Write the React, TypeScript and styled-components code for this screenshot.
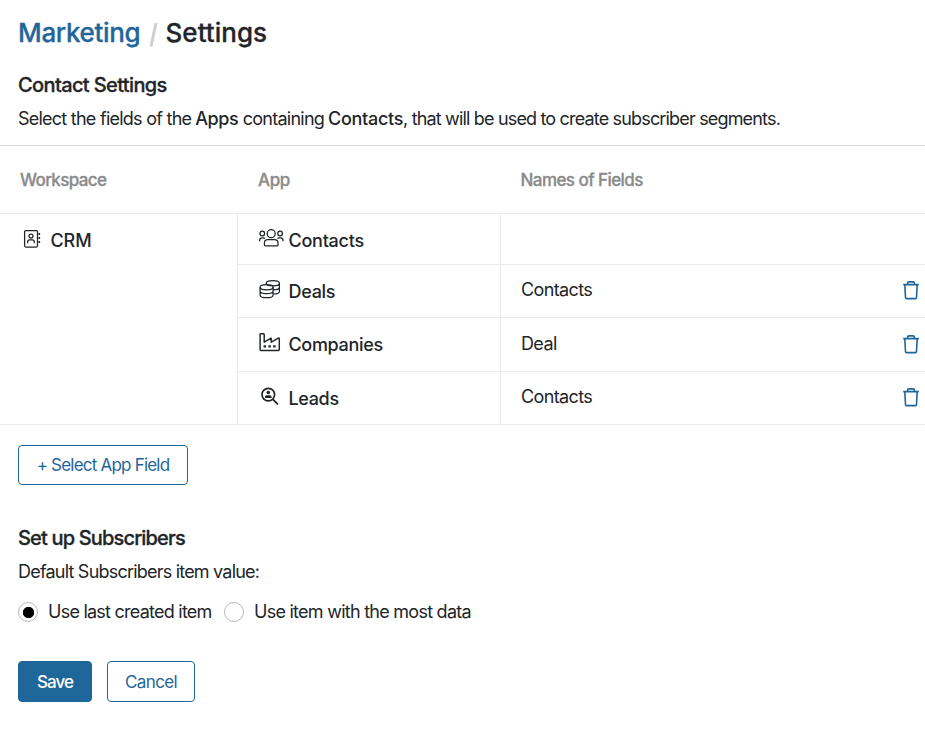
import React, { useState } from 'react';
import styled, { createGlobalStyle, css } from 'styled-components';

const GlobalStyle = createGlobalStyle`
  *, *::before, *::after { box-sizing: border-box; }
  body {
    margin: 0;
    background: #fff;
    color: #212529;
    font-family: Inter, 'Liberation Sans', sans-serif;
    font-size: 18px;
    overflow: hidden;
  }
  h1, h2, p { margin: 0; }
`;

const blue = '#1f669b';
const rule = '#e9e9e9';

/* letter and word tracking, in pixels */
const tracking = css<{ $ls?: number; $ws?: number }>`
  letter-spacing: ${(p) => p.$ls ?? 0}px;
  word-spacing: ${(p) => p.$ws ?? 0}px;
`;

/* medium weight, slightly thickened */
const medium = css`
  font-weight: 500;
  -webkit-text-stroke: 0.3px currentColor;
`;

const Page = styled.main`
  display: flex;
  flex-direction: column;
  height: 729px;
`;

const Intro = styled.header`
  height: 145px;
  padding: 17px 18px 0;
`;

const Breadcrumb = styled.h1`
  display: flex;
  font-size: 26px;
  line-height: 32px;
  ${medium}
`;

const CrumbLink = styled.a`
  width: 130px;
  color: ${blue};
  letter-spacing: -0.35px;
`;

const Slash = styled.svg`
  width: 10px;
  height: 32px;
  flex: none;
`;

const CrumbCurrent = styled.span`
  margin-left: 7.5px;
  letter-spacing: 0.03px;
`;

const Heading = styled.h2`
  font-size: 20px;
  line-height: 24px;
  white-space: nowrap;
  ${medium}
  ${tracking}
`;

const ContactHeading = styled(Heading)`
  margin-top: 24px;
`;

const Description = styled.p`
  display: flex;
  margin-top: 10px;
  line-height: 24px;
  white-space: pre;
`;

const Phrase = styled.span<{ $ls?: number; $ws?: number }>`
  ${tracking}
`;

const Strong = styled.strong<{ $ls?: number; $gap?: number }>`
  margin: 0 ${(p) => p.$gap ?? 0}px 0 4px;
  font-weight: 500;
  ${tracking}
`;

const Table = styled.section`
  border-top: 1px solid #d8d8d8;
  border-bottom: 1px solid ${rule};
  height: 280px;
`;

const TableHead = styled.div`
  display: grid;
  grid-template-columns: 238px 262.5px 1fr;
  height: 68px;
  border-bottom: 1px solid ${rule};
`;

const HeadCell = styled.div<{ $ls?: number; $ws?: number }>`
  padding: 22px 20px 0;
  color: #8b8b8b;
  font-size: 17px;
  line-height: 24px;
  ${medium}
  ${tracking}
`;

const TableBody = styled.div`
  display: grid;
  grid-template-columns: 237px 1fr;
  height: 210px;
`;

const WorkspaceCell = styled.div`
  display: flex;
  padding: 15px 0 0 23px;
  font-weight: 500;
  line-height: 24px;
`;

const WorkspaceName = styled.span`
  margin-left: 9.5px;
  letter-spacing: -0.1px;
`;

const Rows = styled.div`
  display: grid;
  grid-template-rows: 51px 53px 54px 52px;
`;

const Row = styled.div`
  display: grid;
  grid-template-columns: 263px 1fr;
  border-bottom: 1px solid ${rule};
  &:last-child { border-bottom: 0; }
`;

const AppCell = styled.div<{ $ls?: number }>`
  display: flex;
  padding: 15px 0 0 21px;
  border-left: 1px solid ${rule};
  font-weight: 500;
  line-height: 24px;
  ${tracking}
`;

const IconSlot = styled.span`
  width: 29.5px;
  flex: none;
`;

const Icon = styled.svg`
  display: block;
  fill: none;
  stroke: #212529;
  stroke-width: 1.25;
  stroke-linejoin: round;
`;

const FieldCell = styled.div<{ $top?: number }>`
  display: flex;
  justify-content: space-between;
  padding: ${(p) => p.$top ?? 13}px 5px 0 20px;
  border-left: 1px solid ${rule};
  line-height: 24px;
  letter-spacing: -0.62px;
`;

const TrashButton = styled.button`
  width: 18px;
  height: 20px;
  margin-top: 2px;
  padding: 0;
  border: 0;
  background: none;
`;

const TrashIcon = styled(Icon)`
  stroke: ${blue};
  stroke-width: 1.6;
`;

const Controls = styled.section`
  padding: 20px 18px 0;
`;

const Button = styled.button<{ $primary?: boolean; $w: number; $h: number; $ls?: number; $ws?: number }>`
  width: ${(p) => p.$w}px;
  height: ${(p) => p.$h}px;
  padding: 0;
  border: 1px solid ${blue};
  border-radius: 4px;
  background: ${(p) => (p.$primary ? blue : '#fff')};
  color: ${(p) => (p.$primary ? '#fff' : blue)};
  font-family: inherit;
  font-size: 17px;
  font-weight: ${(p) => (p.$primary ? 500 : 400)};
  white-space: nowrap;
  ${tracking}
`;

const SubscribersHeading = styled(Heading)`
  margin-top: 41px;
`;

const Label = styled.p<{ $ls?: number; $ws?: number }>`
  margin-top: 10px;
  line-height: 24px;
  ${tracking}
`;

const RadioGroup = styled.div`
  display: flex;
  margin-top: 16px;
`;

const Option = styled.label<{ $w?: number; $ls?: number; $ws?: number }>`
  display: flex;
  align-items: center;
  gap: 10px;
  width: ${(p) => (p.$w ? `${p.$w}px` : 'auto')};
  line-height: 24px;
  white-space: nowrap;
  ${tracking}
`;

const Radio = styled.input`
  appearance: none;
  flex: none;
  width: 20px;
  height: 20px;
  margin: 0;
  border: 1px solid #b9b9b9;
  border-radius: 50%;
  background: #fff;
  &:checked { background: radial-gradient(circle at 9.5px 9.5px, #000 5.3px, #fff 6px); }
`;

const Actions = styled.div`
  display: flex;
  gap: 15px;
  margin-top: 37px;
`;

const WorkspaceIcon = () => (
  <Icon width="18" height="20" viewBox="0 0 18 20">
    <rect x="1.6" y="1.6" width="12.9" height="16.4" rx="1.2" />
    <circle cx="8" cy="7" r="2" />
    <path d="M4.7 14.2V13c0-1.3.8-2.1 2-2.1h2.6c1.2 0 2 .8 2 2.1v1.2" />
    <path d="M16.3 4v2M16.3 8v2M16.3 12v2" strokeWidth="1.6" />
  </Icon>
);

const PeopleIcon = () => (
  <Icon width="26" height="20" viewBox="0.7 0.7 26 20">
    <circle cx="12.9" cy="5.4" r="4" />
    <circle cx="4" cy="5.2" r="2.3" />
    <circle cx="21.8" cy="5.2" r="2.3" />
    <path d="M6.1 16.7v-2.1c0-2 1.5-3.3 3.5-3.3h6.6c2 0 3.5 1.3 3.5 3.3v2.1c0 .5-.3.8-.8.8h-12c-.5 0-.8-.3-.8-.8zM1.3 13v-1c0-1.5 1-2.4 2.5-2.4h1.3c.6 0 1.1.2 1.5.7M24.7 13v-1c0-1.5-1-2.4-2.5-2.4h-1.5c-.6 0-1.1.2-1.5.7" />
  </Icon>
);

const CoinsIcon = () => (
  <Icon width="22" height="20" viewBox="0 0 22 20">
    <ellipse cx="7.6" cy="7.2" rx="6.5" ry="2.6" />
    <path d="M1.1 7.2v7.7c0 1.6 2.9 2.8 6.5 2.8s6.5-1.2 6.5-2.8V7.2M1.1 11c0 1.5 2.9 2.7 6.5 2.7s6.5-1.2 6.5-2.7" />
    <path d="M7.3 4.6V3.2c0-1.4 2.9-2.5 6.6-2.5s6.5 1.1 6.5 2.5v8.2c0 1.4-2.6 2.5-6.1 2.6M7.3 3.2c0 1.4 2.9 2.6 6.6 2.6s6.5-1.2 6.5-2.6M14.1 9.9c3.6 0 6.3-1.2 6.3-2.6" />
  </Icon>
);

const FactoryIcon = () => (
  <Icon width="22" height="20" viewBox="0 0.4 22 20">
    <path strokeWidth="1.45" d="M1.1 17V2c0-.6.3-.9.9-.9h2.3c.6 0 .9.3.9.9v7.6l7-4v4l7.2-4c.6-.3.9 0 .9.6V17c0 .6-.3.9-.9.9H2c-.6 0-.9-.3-.9-.9z" />
    <path d="M4.6 13.8h2.4M9.4 13.8h2.4M14.2 13.8h2.4" strokeWidth="2.2" />
  </Icon>
);

const LeadIcon = () => (
  <Icon width="22" height="20" viewBox="-0.2 0.3 22 20">
    <circle cx="9.1" cy="7.9" r="6.3" strokeWidth="1.7" />
    <path d="M13.7 12.6l5 5" strokeWidth="1.9" />
    <circle cx="9.1" cy="5.8" r="1.8" fill="#212529" stroke="none" />
    <path d="M5.8 11.3v-1c0-1 .7-1.7 1.7-1.7h3.2c1 0 1.7.7 1.7 1.7v1z" fill="#212529" stroke="none" />
  </Icon>
);

const Trash = () => (
  <TrashIcon width="18" height="20" viewBox="0 0 18 20">
    <path d="M1.2 4.6h15.6M5.6 4.6V3.2c0-.8.5-1.3 1.3-1.3h4.2c.8 0 1.3.5 1.3 1.3v1.4" />
    <path d="M2.8 4.6l.7 12.9c0 .7.4 1.1 1.1 1.1h8.8c.7 0 1.1-.4 1.1-1.1l.7-12.9" />
  </TrashIcon>
);

const apps = [
  { name: 'Contacts', ls: -0.25, icon: <PeopleIcon />, field: '' },
  { name: 'Deals', ls: -0.3, icon: <CoinsIcon />, field: 'Contacts' },
  { name: 'Companies', ls: -0.33, icon: <FactoryIcon />, field: 'Deal', top: 14 },
  { name: 'Leads', ls: -0.35, icon: <LeadIcon />, field: 'Contacts' },
];

export default function App() {
  const [source, setSource] = useState('last');
  return (
    <Page>
      <GlobalStyle />
      <Intro>
        <Breadcrumb>
          <CrumbLink>Marketing</CrumbLink>
          <Slash viewBox="0 0 10 32">
            <path d="M8 6L3 29.5" stroke="#d0d0d0" strokeWidth="3" />
          </Slash>
          <CrumbCurrent>Settings</CrumbCurrent>
        </Breadcrumb>
        <ContactHeading $ls={-0.62}>Contact Settings</ContactHeading>
        <Description>
          <Phrase $ls={-0.78} $ws={0.2}>Select the fields of the</Phrase>
          <Strong $ls={-0.45} $gap={4.5}>Apps</Strong>
          <Phrase $ls={-0.75}>containing</Phrase>
          <Strong $ls={-0.3}>Contacts</Strong>
          <Phrase $ls={-0.83}>, that will be used to create subscriber segments.</Phrase>
        </Description>
      </Intro>
      <Table>
        <TableHead>
          <HeadCell $ls={-0.65}>Workspace</HeadCell>
          <HeadCell $ls={-0.4}>App</HeadCell>
          <HeadCell $ls={-0.56}>Names of Fields</HeadCell>
        </TableHead>
        <TableBody>
          <WorkspaceCell>
            <WorkspaceIcon />
            <WorkspaceName>CRM</WorkspaceName>
          </WorkspaceCell>
          <Rows>
            {apps.map((app) => (
              <Row key={app.name}>
                <AppCell $ls={app.ls}>
                  <IconSlot>{app.icon}</IconSlot>
                  {app.name}
                </AppCell>
                <FieldCell $top={app.top}>
                  {app.field}
                  {app.field && (
                    <TrashButton aria-label="Delete">
                      <Trash />
                    </TrashButton>
                  )}
                </FieldCell>
              </Row>
            ))}
          </Rows>
        </TableBody>
      </Table>
      <Controls>
        <Button $w={170} $h={40} $ls={-0.79}>+ Select App Field</Button>
        <SubscribersHeading $ls={-0.83}>Set up Subscribers</SubscribersHeading>
        <Label $ls={-0.79}>Default Subscribers item value:</Label>
        <RadioGroup>
          <Option $w={206} $ls={-0.76}>
            <Radio type="radio" name="source" checked={source === 'last'} onChange={() => setSource('last')} />
            Use last created item
          </Option>
          <Option $ls={-0.74}>
            <Radio type="radio" name="source" checked={source === 'most'} onChange={() => setSource('most')} />
            Use item with the most data
          </Option>
        </RadioGroup>
        <Actions>
          <Button $primary $w={74} $h={41} $ls={-0.9}>Save</Button>
          <Button $w={88} $h={41} $ls={-0.6}>Cancel</Button>
        </Actions>
      </Controls>
    </Page>
  );
}
